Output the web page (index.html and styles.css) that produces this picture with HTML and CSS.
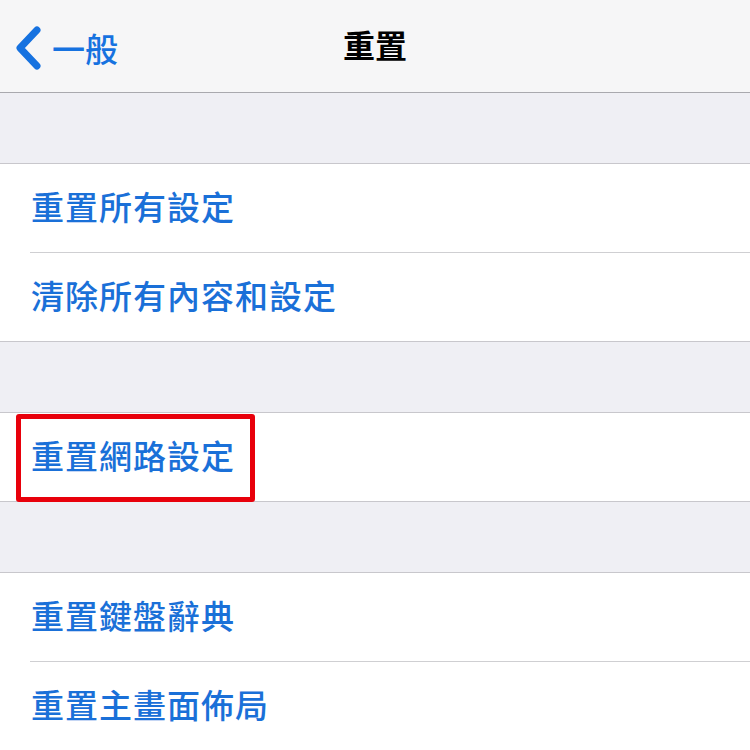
FILE: index.html
```html
<!DOCTYPE html>
<html lang="zh-Hant">
<head>
  <meta charset="UTF-8" />
  <meta name="viewport" content="width=device-width, initial-scale=1" />
  <title>重置</title>
  <link rel="stylesheet" href="styles.css">
</head>
<body>

  <!-- Navigation bar -->
  <div class="navbar">
    <div class="back">
      <svg class="chevron" width="30" height="46" viewBox="0 0 30 46">
        <path d="M24 5 L7 23 L24 41" fill="none" stroke="#1672e0" stroke-width="7" stroke-linecap="round" stroke-linejoin="round"/>
      </svg>
      <span>一般</span>
    </div>
    <div class="title">重置</div>
  </div>

  <div class="gap"></div>

  <div class="group">
    <div class="row">重置所有設定</div>
    <div class="row">清除所有內容和設定</div>
  </div>

  <div class="gap"></div>

  <div class="group">
    <div class="row highlighted">
      重置網路設定
      <div class="mark"></div>
    </div>
  </div>

  <div class="gap"></div>

  <div class="group">
    <div class="row">重置鍵盤辭典</div>
    <div class="row">重置主畫面佈局</div>
  </div>

</body>
</html>
```

FILE: styles.css
```css
body, html {
  margin: 0; padding: 0; height: 100%;
  font-family: "Noto Sans CJK TC", "Noto Sans", sans-serif;
  background: #efeff4;
  overflow: hidden;
}

/* Navigation bar */
.navbar {
  height: 92px;
  background: #f6f6f7;
  border-bottom: 1px solid #a9a9ae;
  position: relative;
  display: flex;
  align-items: center;
  justify-content: center;
}
.back {
  position: absolute;
  left: 13px;
  top: 25px;
  display: flex;
  align-items: center;
  color: #1672e0;
  font-size: 33px;
  font-weight: 500;
  gap: 9px;
}
.back span {
  line-height: 44px;
}
.title {
  font-size: 32px;
  font-weight: 700;
  color: #000;
  margin-top: -4px;
}

.gap {
  height: 70px;
}

/* Grouped list */
.group {
  background: #fff;
  border-top: 1px solid #c8c7cc;
  border-bottom: 1px solid #c8c7cc;
  padding-left: 30px;
}
.row {
  height: 84px;
  padding-bottom: 4px;
  display: flex;
  align-items: center;
  color: #1a70d8;
  font-size: 33px;
  font-weight: 500;
  letter-spacing: 1px;
  padding-left: 1px;
  border-bottom: 1px solid #cfcfd2;
  position: relative;
}
.row:last-child {
  border-bottom: none;
}
.mark {
  position: absolute;
  left: -14px;
  top: 1px;
  width: 229px;
  height: 78px;
  border: 5px solid #e8000b;
  border-radius: 3px;
}
```
